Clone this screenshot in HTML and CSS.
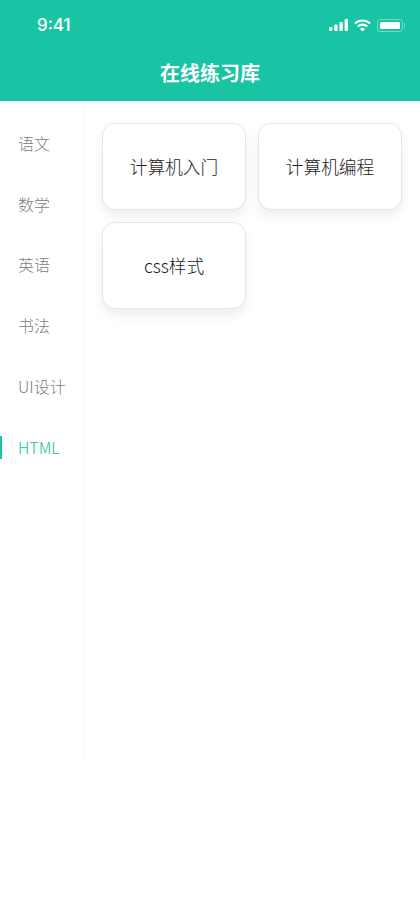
FILE: index.html
```html
<!DOCTYPE html>
<html lang="zh-CN">
<head>
  <meta charset="UTF-8">
  <meta name="viewport" content="width=device-width, initial-scale=1.0">
  <title>在线练习库</title>
  <link rel="stylesheet" href="styles.css">
</head>
<body>

  <header class="header">
    <div class="status">
      <span class="time">9:41</span>
      <div class="status-icons">
        <svg class="signal" width="19" height="12" viewBox="0 0 19 12" fill="#fff">
          <rect x="0" y="8" width="3.4" height="4" rx="1"/>
          <rect x="5.2" y="5.5" width="3.4" height="6.5" rx="1"/>
          <rect x="10.4" y="3" width="3.4" height="9" rx="1"/>
          <rect x="15.6" y="0" width="3.4" height="12" rx="1"/>
        </svg>
        <svg class="wifi" width="17" height="13" viewBox="0 0 17 13" fill="none" stroke="#fff" stroke-width="2.1">
          <path d="M1 4.6a10.8 10.8 0 0 1 15 0"/>
          <path d="M3.7 7.6a6.9 6.9 0 0 1 9.6 0"/>
          <path d="M8.5 12.6 6 10.1a3.5 3.5 0 0 1 5 0z" fill="#fff" stroke="none"/>
        </svg>
        <div class="battery">
          <div class="battery-level"></div>
        </div>
      </div>
    </div>
    <h1 class="title">在线练习库</h1>
  </header>

  <div class="content">
    <nav class="side">
      <a class="side-item">语文</a>
      <a class="side-item">数学</a>
      <a class="side-item">英语</a>
      <a class="side-item">书法</a>
      <a class="side-item">UI设计</a>
      <a class="side-item active">HTML</a>
    </nav>

    <main class="cards">
      <div class="card">计算机入门</div>
      <div class="card">计算机编程</div>
      <div class="card">css样式</div>
    </main>
  </div>

</body>
</html>
```

FILE: styles.css
```css
* {
  box-sizing: border-box;
}

body {
  margin: 0;
  background-color: #fff;
  font-family: "Noto Sans CJK SC", "Noto Sans", sans-serif;
  color: #333;
}

.header {
  height: 101px;
  background-color: #19c4a5;
  color: #fff;
}

.status {
  height: 50px;
  padding: 0 16px 0 37px;
  display: flex;
  align-items: center;
  justify-content: space-between;
}

.time {
  font-family: Inter, sans-serif;
  font-size: 17px;
  font-weight: 500;
}

.status-icons {
  display: flex;
  align-items: center;
  gap: 6px;
}

.battery {
  position: relative;
  width: 26px;
  height: 13px;
  padding: 2px;
  border: 1px solid rgba(255, 255, 255, 0.4);
  border-radius: 3.5px;
  margin-right: 1px;
}

.battery::after {
  content: "";
  position: absolute;
  right: -3px;
  top: 3px;
  width: 1.5px;
  height: 5px;
  background-color: rgba(255, 255, 255, 0.4);
}

.battery-level {
  height: 100%;
  background-color: #fff;
  border-radius: 1.5px;
}

.title {
  margin: 0;
  font-size: 20px;
  font-weight: 700;
  line-height: 46px;
  text-align: center;
}

.content {
  display: flex;
}

.side {
  width: 84px;
  height: 661px;
  padding-top: 11.5px;
  border-right: 1px solid #f6f6f6;
  flex-shrink: 0;
}

.side-item {
  display: flex;
  align-items: center;
  height: 60.8px;
  padding-left: 18px;
  font-size: 16px;
  font-weight: 300;
  color: #808080;
}

.side-item.active {
  position: relative;
  color: #0fbf9e;
}

.side-item.active::before {
  content: "";
  position: absolute;
  left: 0;
  top: 20px;
  width: 2px;
  height: 23px;
  background-color: #19c4a5;
}

.cards {
  flex: 1;
  padding: 22px 18px;
  display: grid;
  grid-template-columns: 144px 144px;
  grid-auto-rows: 87px;
  gap: 12px;
}

.card {
  display: flex;
  align-items: center;
  justify-content: center;
  padding-bottom: 2px;
  background-color: #fff;
  border: 1.5px solid #e6e6e6;
  border-radius: 13px;
  box-shadow: 0 6px 12px rgba(0, 0, 0, 0.07);
  font-size: 17.7px;
  font-weight: 300;
  color: #1c1c1c;
}
```
